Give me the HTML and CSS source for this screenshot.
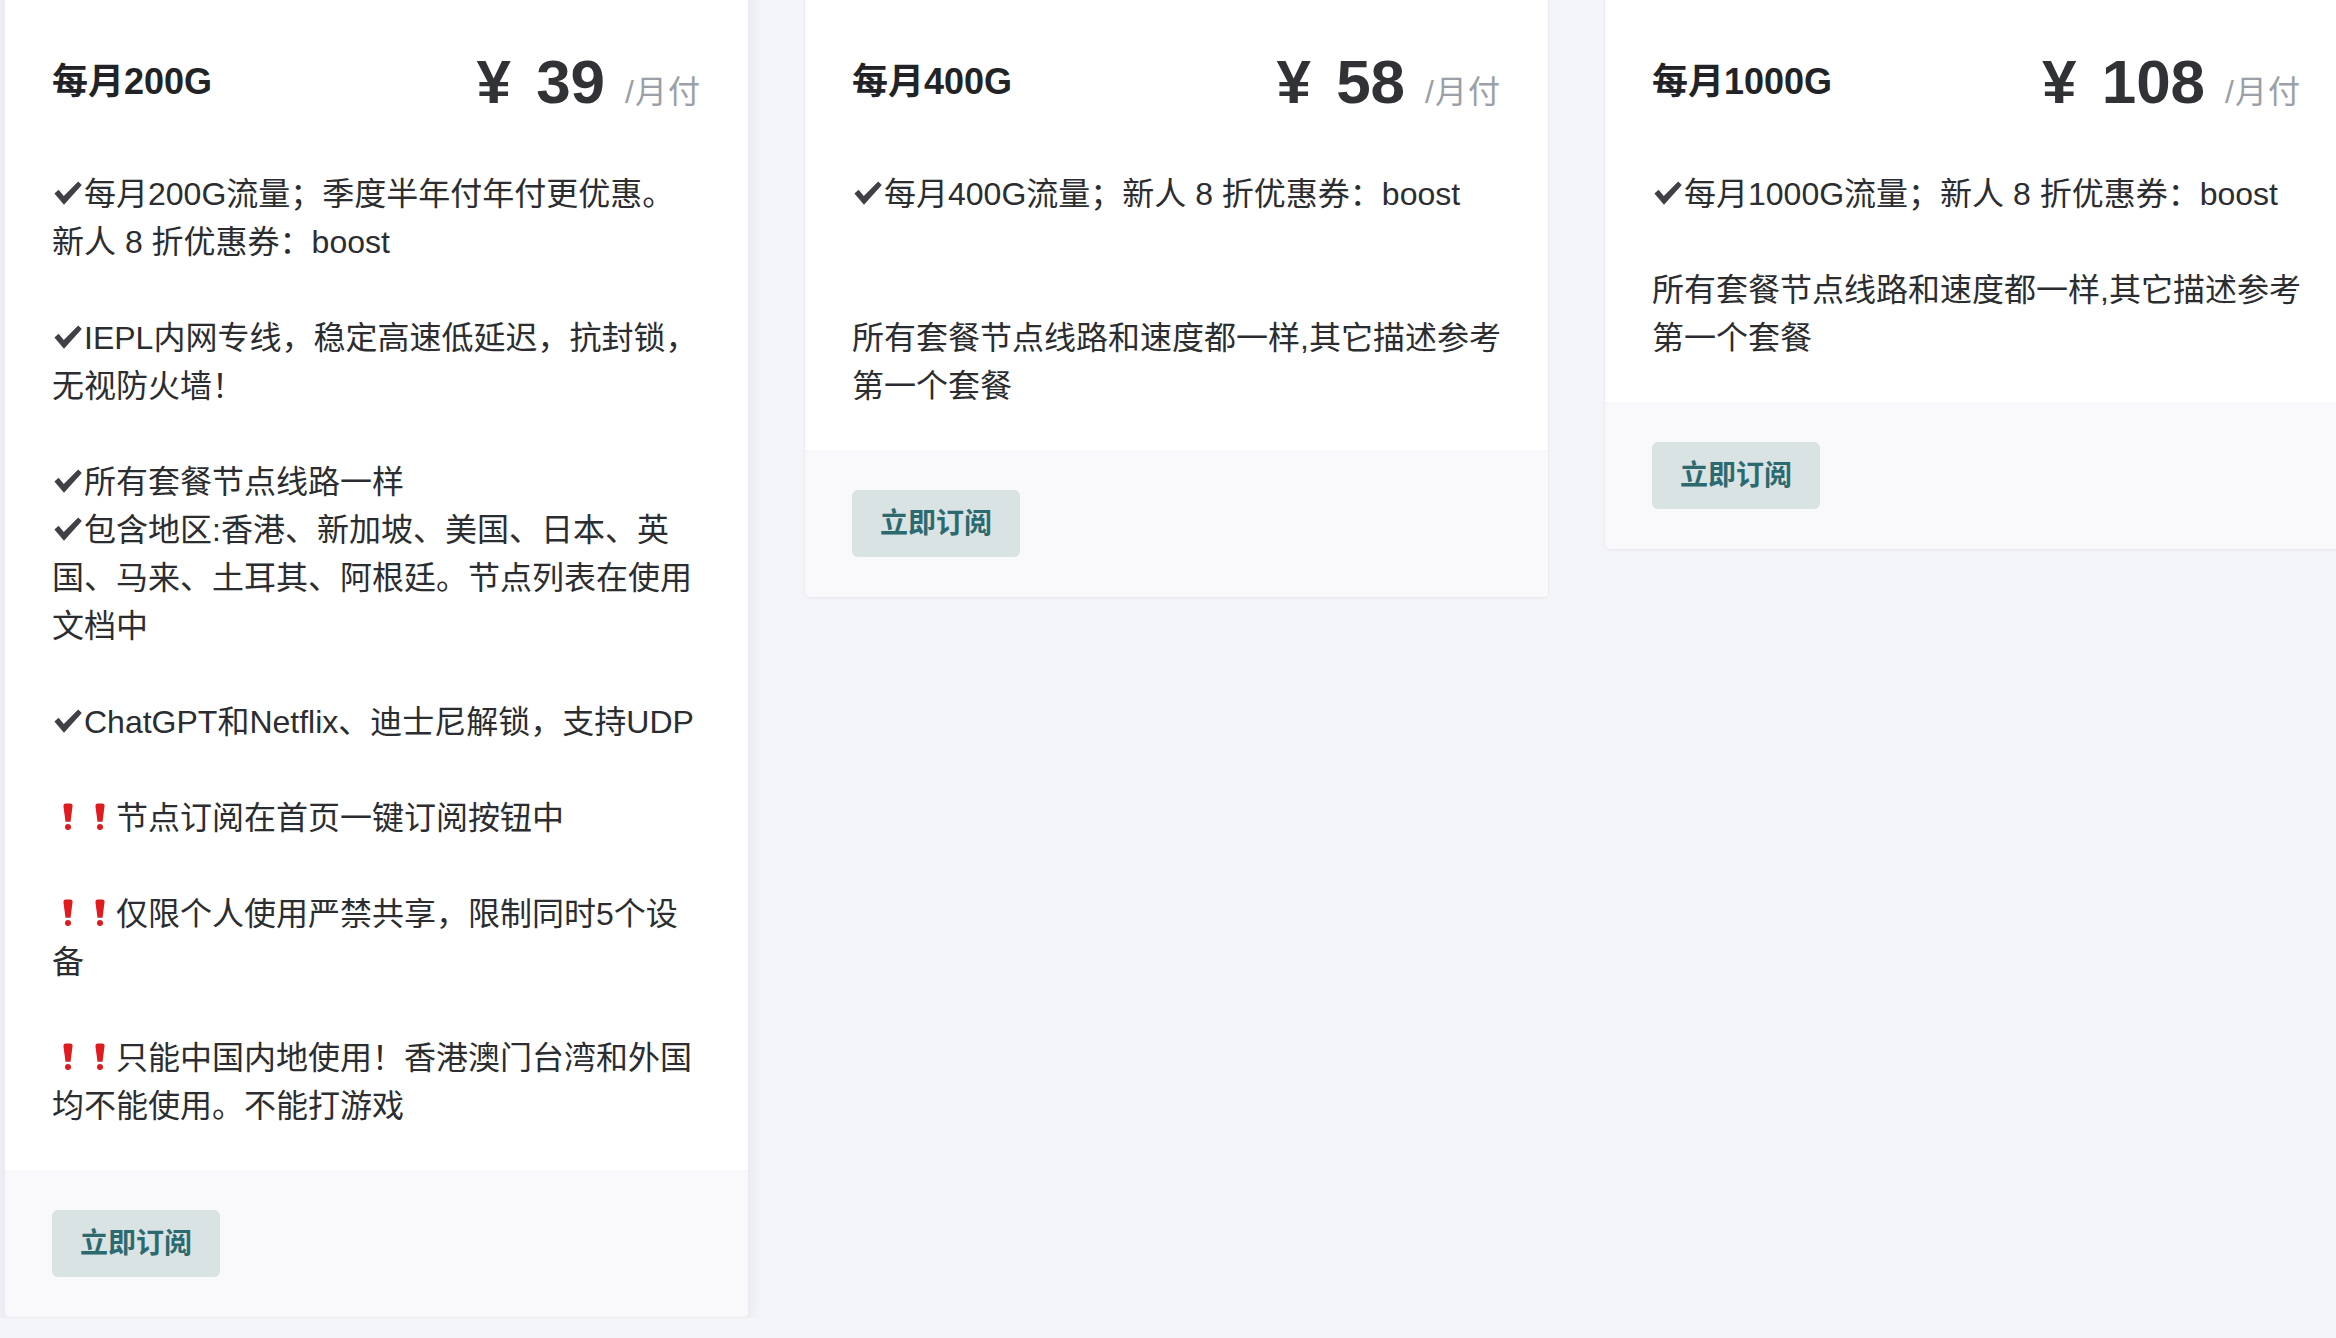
FILE: index.html
```html
<!DOCTYPE html>
<html lang="zh-CN">
<head>
<meta charset="utf-8">
<title>套餐</title>
<link rel="stylesheet" href="styles.css">
</head>
<body>
<div class="plans">
  <div class="plan plan-active">
    <div class="plan-body">
      <div class="plan-head">
        <div class="plan-name">每月200G</div>
        <div class="plan-price"><span class="amount">¥ 39</span><span class="period">/月付</span></div>
      </div>
<div class="plan-desc"><svg class="ic" viewBox="0 0 32 32"><path d="M2.4 16.6 L6.6 12.8 L11.8 19 L26.2 4.6 L29.8 8 L12 27.8 Z"/></svg>每月200G流量；季度半年付年付更优惠。
新人 8 折优惠券：boost

<svg class="ic" viewBox="0 0 32 32"><path d="M2.4 16.6 L6.6 12.8 L11.8 19 L26.2 4.6 L29.8 8 L12 27.8 Z"/></svg>IEPL内网专线，稳定高速低延迟，抗封锁，无视防火墙！

<svg class="ic" viewBox="0 0 32 32"><path d="M2.4 16.6 L6.6 12.8 L11.8 19 L26.2 4.6 L29.8 8 L12 27.8 Z"/></svg>所有套餐节点线路一样
<svg class="ic" viewBox="0 0 32 32"><path d="M2.4 16.6 L6.6 12.8 L11.8 19 L26.2 4.6 L29.8 8 L12 27.8 Z"/></svg>包含地区:香港、新加坡、美国、日本、英国、马来、土耳其、阿根廷。节点列表在使用文档中

<svg class="ic" viewBox="0 0 32 32"><path d="M2.4 16.6 L6.6 12.8 L11.8 19 L26.2 4.6 L29.8 8 L12 27.8 Z"/></svg>ChatGPT和Netflix、迪士尼解锁，支持UDP

<svg class="ic ic-warn" viewBox="0 0 32 32"><path d="M11.4 5 Q11.4 2.6 13.8 2.6 H18.2 Q20.6 2.6 20.6 5 L18.5 20.8 H13.5 Z"/><circle cx="16" cy="26" r="3"/></svg><svg class="ic ic-warn" viewBox="0 0 32 32"><path d="M11.4 5 Q11.4 2.6 13.8 2.6 H18.2 Q20.6 2.6 20.6 5 L18.5 20.8 H13.5 Z"/><circle cx="16" cy="26" r="3"/></svg>节点订阅在首页一键订阅按钮中

<svg class="ic ic-warn" viewBox="0 0 32 32"><path d="M11.4 5 Q11.4 2.6 13.8 2.6 H18.2 Q20.6 2.6 20.6 5 L18.5 20.8 H13.5 Z"/><circle cx="16" cy="26" r="3"/></svg><svg class="ic ic-warn" viewBox="0 0 32 32"><path d="M11.4 5 Q11.4 2.6 13.8 2.6 H18.2 Q20.6 2.6 20.6 5 L18.5 20.8 H13.5 Z"/><circle cx="16" cy="26" r="3"/></svg>仅限个人使用严禁共享，限制同时5个设备

<svg class="ic ic-warn" viewBox="0 0 32 32"><path d="M11.4 5 Q11.4 2.6 13.8 2.6 H18.2 Q20.6 2.6 20.6 5 L18.5 20.8 H13.5 Z"/><circle cx="16" cy="26" r="3"/></svg><svg class="ic ic-warn" viewBox="0 0 32 32"><path d="M11.4 5 Q11.4 2.6 13.8 2.6 H18.2 Q20.6 2.6 20.6 5 L18.5 20.8 H13.5 Z"/><circle cx="16" cy="26" r="3"/></svg>只能中国内地使用！香港澳门台湾和外国均不能使用。不能打游戏</div>
    </div>
    <div class="plan-foot"><button class="btn-subscribe">立即订阅</button></div>
  </div>

  <div class="plan">
    <div class="plan-body">
      <div class="plan-head">
        <div class="plan-name">每月400G</div>
        <div class="plan-price"><span class="amount">¥ 58</span><span class="period">/月付</span></div>
      </div>
<div class="plan-desc"><svg class="ic" viewBox="0 0 32 32"><path d="M2.4 16.6 L6.6 12.8 L11.8 19 L26.2 4.6 L29.8 8 L12 27.8 Z"/></svg>每月400G流量；新人 8 折优惠券：boost


所有套餐节点线路和速度都一样,其它描述参考第一个套餐</div>
    </div>
    <div class="plan-foot"><button class="btn-subscribe">立即订阅</button></div>
  </div>

  <div class="plan">
    <div class="plan-body">
      <div class="plan-head">
        <div class="plan-name">每月1000G</div>
        <div class="plan-price"><span class="amount">¥ 108</span><span class="period">/月付</span></div>
      </div>
<div class="plan-desc"><svg class="ic" viewBox="0 0 32 32"><path d="M2.4 16.6 L6.6 12.8 L11.8 19 L26.2 4.6 L29.8 8 L12 27.8 Z"/></svg>每月1000G流量；新人 8 折优惠券：boost

所有套餐节点线路和速度都一样,其它描述参考第一个套餐</div>
    </div>
    <div class="plan-foot"><button class="btn-subscribe">立即订阅</button></div>
  </div>
</div>
</body>
</html>
```

FILE: styles.css
```css
html, body {
  margin: 0;
  padding: 0;
  overflow: hidden;
  background: #f4f5f9;
}

body {
  font-family: "Liberation Sans", "Noto Sans CJK SC", sans-serif;
  color: #2b2d30;
}

.plans {
  display: grid;
  grid-template-columns: repeat(3, 745px);
  column-gap: 55px;
  align-items: start;
  padding-left: 4px;
  margin-top: -24px;
}

.plan {
  background: #ffffff;
  border: 1px solid #eaecf1;
  border-radius: 6px;
  overflow: hidden;
  box-shadow: 0 1px 2px rgba(20, 30, 60, 0.03);
}

.plan-active {
  box-shadow: 0 4px 16px rgba(20, 30, 60, 0.09);
}

.plan-body {
  padding: 69px 44px 40px 47px;
}

.plan-head {
  display: flex;
  align-items: center;
  justify-content: space-between;
  height: 72px;
  margin-bottom: 52px;
}

.plan-name {
  font-size: 36px;
  line-height: 54px;
  font-weight: 700;
  color: #222326;
}

.plan-price {
  display: flex;
  align-items: baseline;
  margin-right: 3px;
}

.amount {
  font-size: 62px;
  line-height: 72px;
  font-weight: 700;
  word-spacing: 8px;
  color: #303235;
}

.period {
  font-size: 32px;
  margin-left: 20px;
  letter-spacing: 1px;
  color: #9a9fa8;
}

.plan-desc {
  white-space: pre-line;
  font-size: 32px;
  line-height: 48px;
  color: #2b2d30;
}

.ic {
  display: inline-block;
  width: 1em;
  height: 1em;
  vertical-align: -0.14em;
  fill: #404144;
}

.ic-warn {
  fill: #e01b1f;
}

.plan-foot {
  background: #f9f9fb;
  border-top: 1px solid #f5f6f8;
  padding: 39px 47px 40px;
}

.btn-subscribe {
  display: inline-block;
  height: 67px;
  padding: 0 28px;
  border: none;
  border-radius: 6px;
  background: #d9e3e4;
  color: #2d6a6f;
  font-family: "Liberation Sans", "Noto Sans CJK SC", sans-serif;
  font-size: 28px;
  font-weight: 700;
  line-height: 67px;
  cursor: pointer;
}
```
